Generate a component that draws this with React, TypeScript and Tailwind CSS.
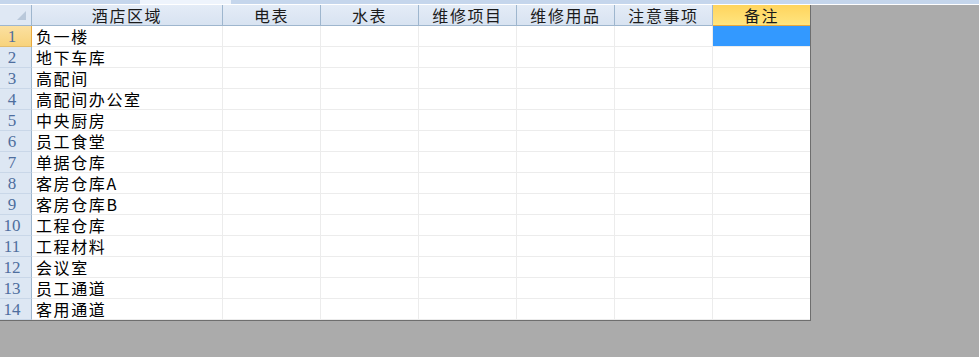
const COLS = ["电表", "水表", "维修项目", "维修用品", "注意事项", "备注"];
const ROWS = [
  "负一楼",
  "地下车库",
  "高配间",
  "高配间办公室",
  "中央厨房",
  "员工食堂",
  "单据仓库",
  "客房仓库A",
  "客房仓库B",
  "工程仓库",
  "工程材料",
  "会议室",
  "员工通道",
  "客用通道",
];

const cjk = { fontFamily: '"Noto Sans CJK SC", "Noto Sans", sans-serif' };
const num = { fontFamily: '"Liberation Serif", "DejaVu Serif", serif' };

export default function App() {
  return (
    <div className="w-[979px] h-[357px] bg-[#ababab] overflow-hidden flex flex-col">
      {/* tab strip */}
      <div className="h-[4px] bg-[#c5d6ec] flex shrink-0">
        <div className="w-[140px]" />
        <div className="w-[91px] bg-[#eef4fc]" />
      </div>
      <div className="h-[1px] bg-white shrink-0" />

      <div className="flex">
        <div className="w-[811px] bg-white border-r border-b border-[#6e6e6e] text-[16px] leading-[19px]">
          {/* column headers */}
          <div className="flex h-[21px]">
            <div className="w-[32px] h-full border-r border-b border-[#9eb6ce] bg-[#dfe8f4] relative">
              <div className="absolute right-[5px] bottom-[5px] w-0 h-0 border-l-[9px] border-l-transparent border-b-[9px] border-b-[#b9c8da]" />
            </div>
            <div
              className="w-[191px] h-full border-r border-b border-[#9eb6ce] bg-gradient-to-b from-[#e4ecf7] to-[#d8e3f1] flex items-center justify-center tracking-[1.6px] text-[#1b1b1b]"
              style={cjk}
            >
              酒店区域
            </div>
            {COLS.map((c, i) =>
              i === COLS.length - 1 ? (
                <div
                  key={c}
                  className="w-[97px] h-full border-b border-[#e8a83c] bg-gradient-to-b from-[#ffd45c] to-[#ffe57f] flex items-center justify-center tracking-[1.6px] text-[#1b1b1b]"
                  style={cjk}
                >
                  {c}
                </div>
              ) : (
                <div
                  key={c}
                  className="w-[98px] h-full border-r border-b border-[#9eb6ce] bg-gradient-to-b from-[#e4ecf7] to-[#d8e3f1] flex items-center justify-center tracking-[1.6px] text-[#1b1b1b]"
                  style={cjk}
                >
                  {c}
                </div>
              )
            )}
          </div>

          {/* data rows */}
          {ROWS.map((r, ri) => (
            <div key={r} className="flex h-[21px]">
              <div
                className={
                  ri === 0
                    ? "w-[32px] h-full border-r border-b border-r-[#e8a83c] border-b-[#e3bd6e] bg-gradient-to-b from-[#fbe0a0] to-[#f8d37c] flex items-center justify-center pr-[7px] text-[17px] text-[#4e6e9e]"
                    : "w-[32px] h-full border-r border-b border-r-[#9eb6ce] border-b-[#c9d7e8] bg-[#dde7f3] flex items-center justify-center pr-[7px] text-[17px] text-[#4e6e9e]"
                }
                style={num}
              >
                {ri + 1}
              </div>
              <div
                className="w-[191px] h-full border-r border-b border-[#ececec] flex items-center pl-[4px] tracking-[1.6px] text-black"
                style={cjk}
              >
                {r}
              </div>
              {COLS.map((c, ci) =>
                ci === COLS.length - 1 ? (
                  <div
                    key={c}
                    className={
                      ri === 0
                        ? "w-[97px] h-full border-b border-[#ececec] bg-[#3399ff]"
                        : "w-[97px] h-full border-b border-[#ececec]"
                    }
                  />
                ) : (
                  <div key={c} className="w-[98px] h-full border-r border-b border-[#ececec]" />
                )
              )}
            </div>
          ))}
        </div>
        <div className="flex-1" />
      </div>
    </div>
  );
}
